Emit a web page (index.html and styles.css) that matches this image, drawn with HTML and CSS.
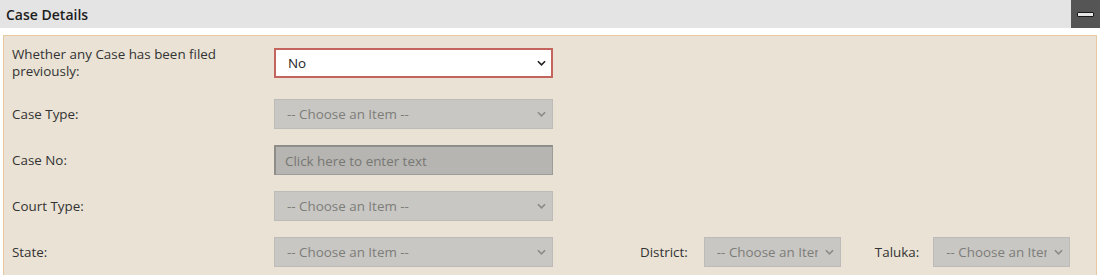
FILE: index.html
```html
<!DOCTYPE html>
<html>
<head>
<meta charset="utf-8">
<link rel="stylesheet" href="styles.css">
</head>
<body>
<div class="header">
  <div class="title">Case Details</div>
  <button class="collapse" aria-label="Collapse"><span class="bar"></span></button>
</div>
<div class="panel">
  <div class="row first">
    <label class="lbl">Whether any Case has been filed previously:</label>
    <span class="sel wide active">
      <select><option>No</option></select>
      <svg class="chev" viewBox="0 0 10 6" width="9" height="6"><path d="M1 1 L5 5 L9 1" fill="none" stroke="#222" stroke-width="1.8"/></svg>
    </span>
  </div>
  <div class="row">
    <label class="lbl">Case Type:</label>
    <span class="sel wide">
      <select disabled><option>-- Choose an Item --</option></select>
      <svg class="chev" viewBox="0 0 10 6" width="9" height="6"><path d="M1 1 L5 5 L9 1" fill="none" stroke="#8a8a88" stroke-width="1.8"/></svg>
    </span>
  </div>
  <div class="row">
    <label class="lbl">Case No:</label>
    <input class="txt" type="text" placeholder="Click here to enter text" disabled>
  </div>
  <div class="row">
    <label class="lbl">Court Type:</label>
    <span class="sel wide">
      <select disabled><option>-- Choose an Item --</option></select>
      <svg class="chev" viewBox="0 0 10 6" width="9" height="6"><path d="M1 1 L5 5 L9 1" fill="none" stroke="#8a8a88" stroke-width="1.8"/></svg>
    </span>
  </div>
  <div class="row">
    <label class="lbl">State:</label>
    <span class="sel wide">
      <select disabled><option>-- Choose an Item --</option></select>
      <svg class="chev" viewBox="0 0 10 6" width="9" height="6"><path d="M1 1 L5 5 L9 1" fill="none" stroke="#8a8a88" stroke-width="1.8"/></svg>
    </span>
    <label class="lbl2 district">District:</label>
    <span class="sel small">
      <select disabled><option>-- Choose an Item --</option></select>
      <svg class="chev" viewBox="0 0 10 6" width="9" height="6"><path d="M1 1 L5 5 L9 1" fill="none" stroke="#8a8a88" stroke-width="1.8"/></svg>
    </span>
    <label class="lbl2 taluka">Taluka:</label>
    <span class="sel small">
      <select disabled><option>-- Choose an Item --</option></select>
      <svg class="chev" viewBox="0 0 10 6" width="9" height="6"><path d="M1 1 L5 5 L9 1" fill="none" stroke="#8a8a88" stroke-width="1.8"/></svg>
    </span>
  </div>
</div>
</body>
</html>
```
FILE: styles.css
```css
html, body {
  margin: 0;
  padding: 0;
  background: #ffffff;
  font-family: "Open Sans", "Noto Sans", sans-serif;
  font-size: 13.4px;
  color: #333;
}
.header {
  display: flex;
  align-items: center;
  height: 28px;
  background: #e4e4e4;
}
.title {
  flex: 1;
  padding-left: 6px;
  font-size: 14px;
  font-weight: 600;
  color: #1e1e1e;
}
.collapse {
  width: 29px;
  height: 28px;
  margin: 0;
  padding: 0;
  border: none;
  background: #555555;
  display: flex;
  align-items: center;
  justify-content: center;
}
.collapse .bar {
  display: block;
  width: 15px;
  height: 3px;
  background: #e6e6e6;
  border: 1px solid #1a1a1a;
  border-radius: 1px;
}
.panel {
  margin: 7px 3px 0 3px;
  border: 1px solid #e8c8a0;
  border-bottom: none;
  background: #e9e2d5;
  padding: 10px 0 8px 8px;
  display: flex;
  flex-direction: column;
  gap: 16px;
}
.row {
  display: flex;
  align-items: center;
  min-height: 30px;
}
.row.first {
  margin-bottom: 3px;
}
.lbl {
  width: 262px;
  flex: none;
  line-height: 17px;
  color: #333;
  padding-right: 40px;
  box-sizing: border-box;
}
.lbl2 {
  flex: none;
  color: #333;
  margin-right: 16px;
}
.district { margin-left: 87px; }
.taluka { margin-left: 34px; margin-right: 14px; }
.sel {
  position: relative;
  display: block;
  flex: none;
  height: 30px;
}
.sel.wide { width: 279px; }
.sel.small { width: 137px; }
.sel select {
  appearance: none;
  -webkit-appearance: none;
  width: 100%;
  height: 100%;
  box-sizing: border-box;
  margin: 0;
  font-family: "Open Sans", "Noto Sans", sans-serif;
  font-size: 13.4px;
  padding: 0 22px 0 12px;
  background: #c8c7c3;
  border: 1px solid #bcbbb7;
  color: #7d7d7a;
  border-radius: 0;
  opacity: 1;
}
.sel.active select {
  background: #ffffff;
  border: 2px solid #c3655c;
  color: #222;
  padding-left: 12px;
}
.sel .chev {
  position: absolute;
  right: 7px;
  top: 12px;
  pointer-events: none;
}
.txt {
  width: 279px;
  height: 30px;
  box-sizing: border-box;
  margin: 0;
  padding: 0 9px;
  font-family: "Open Sans", "Noto Sans", sans-serif;
  font-size: 13.4px;
  background: #b6b5b1;
  border: 1px solid #9c9b98;
  border-top: 2px solid #8e8d8a;
  border-left: 2px solid #8e8d8a;
  border-radius: 0;
}
.txt::placeholder {
  color: #777774;
  opacity: 1;
}
```
